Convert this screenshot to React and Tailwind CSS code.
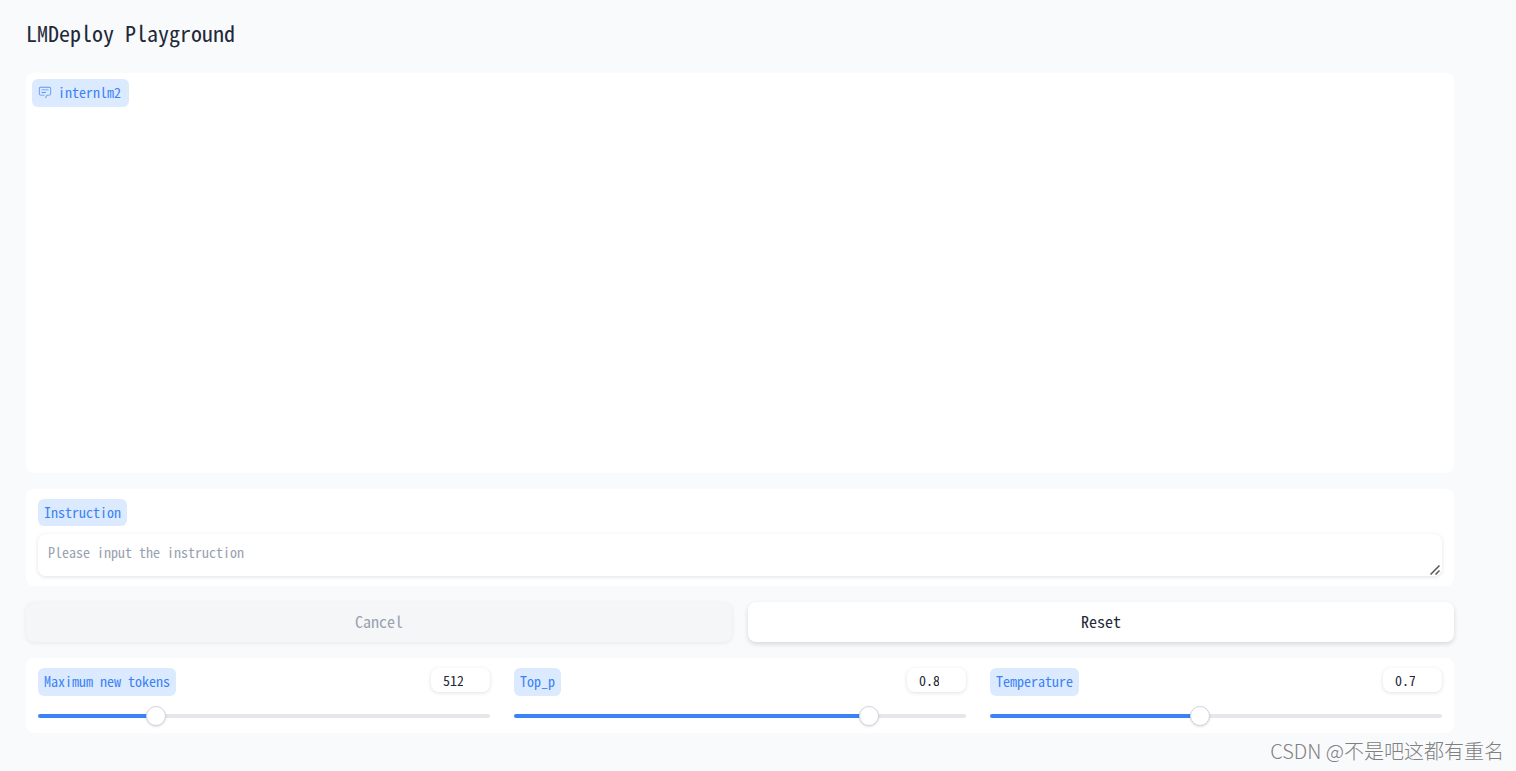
import React, { useState } from "react";

const chip = "flex w-fit items-center rounded-md bg-[#dbeafe] pb-0.5 text-sm text-[#3b82f6]";

const sliders = [
    { id: "max-tokens", label: "Maximum new tokens", min: 1, max: 2048, step: 1, initial: 512 },
    { id: "top-p", label: "Top_p", min: 0.01, max: 1, step: 0.01, initial: 0.8 },
    { id: "temperature", label: "Temperature", min: 0.01, max: 1.5, step: 0.01, initial: 0.7 },
];

function ChatIcon() {
    return (
        <svg viewBox="0 0 32 32" className="h-3.5 w-3.5 opacity-80" fill="currentColor" aria-hidden="true">
            <path d="M17.74 30L16 29l4-7h6a2 2 0 0 0 2-2V8a2 2 0 0 0-2-2H6a2 2 0 0 0-2 2v12a2 2 0 0 0 2 2h9v2H6a4 4 0 0 1-4-4V8a4 4 0 0 1 4-4h20a4 4 0 0 1 4 4v12a4 4 0 0 1-4 4h-4.84Z" />
            <path d="M8 10h16v2H8zM8 16h10v2H8z" />
        </svg>
    );
}

function ResizeGrip() {
    return (
        <svg
            viewBox="0 0 10 10"
            className="pointer-events-none absolute right-0.5 bottom-px h-2.5 w-2.5 text-[#555]"
            stroke="currentColor"
            strokeWidth="1.5"
            fill="none"
            aria-hidden="true"
        >
            <path d="M0.5 9.5L9.5 0.5M5.5 9.5L9.5 5.5" />
        </svg>
    );
}

function ParamSlider({ id, label, min, max, step, initial }) {
    const [value, setValue] = useState(initial);
    const percent = ((value - min) / (max - min)) * 100;

    return (
        <div>
            <div className="flex items-start justify-between">
                <label htmlFor={id} className={`${chip} h-7 px-1.5`}>{label}</label>
                <input
                    type="number"
                    aria-label={`${label} value`}
                    min={min}
                    max={max}
                    step={step}
                    value={value}
                    onChange={e => setValue(e.target.value)}
                    className="h-6 w-[59px] rounded-lg bg-white px-3 text-sm text-gray-800 shadow-[0_1px_4px_rgba(0,0,0,0.12)] outline-none"
                />
            </div>
            <div className="mt-2.5 mb-[7px] flex h-5 items-center">
                <input
                    id={id}
                    type="range"
                    min={min}
                    max={max}
                    step={step}
                    value={value}
                    onChange={e => setValue(e.target.value)}
                    style={{ backgroundSize: `${percent}% 100%` }}
                    className="h-1 w-full cursor-pointer appearance-none rounded-full bg-gray-200 bg-[linear-gradient(#3b82f6,#3b82f6)] bg-no-repeat [&::-webkit-slider-thumb]:h-5 [&::-webkit-slider-thumb]:w-5 [&::-webkit-slider-thumb]:appearance-none [&::-webkit-slider-thumb]:rounded-full [&::-webkit-slider-thumb]:border [&::-webkit-slider-thumb]:border-gray-300 [&::-webkit-slider-thumb]:bg-white [&::-webkit-slider-thumb]:shadow-sm"
                />
            </div>
        </div>
    );
}

function App() {
    const [instruction, setInstruction] = useState("");

    return (
        <div className="relative min-h-screen bg-[#f9fafc] pt-3.5 pr-[62px] pb-9 pl-[26px] font-['Noto_Sans_Mono_CJK_SC','Liberation_Mono',monospace] text-gray-800">
            <h1 className="mb-[23px] text-[22px] leading-9 font-medium text-gray-800">LMDeploy Playground</h1>

            <main className="flex flex-col gap-4">
                {/* Chat history */}
                <section className="h-[400px] rounded-lg bg-white p-1.5">
                    <div className={`${chip} h-7 gap-1.5 pr-2 pl-1.5`}>
                        <ChatIcon />
                        internlm2
                    </div>
                </section>

                <section className="rounded-lg bg-white px-3 py-2.5">
                    <label htmlFor="instruction" className={`${chip} mb-2 h-[27px] px-1.5`}>Instruction</label>
                    <div className="relative">
                        <textarea
                            id="instruction"
                            rows={1}
                            value={instruction}
                            onChange={e => setInstruction(e.target.value)}
                            placeholder="Please input the instruction"
                            className="block h-[42px] w-full overflow-hidden rounded-lg bg-white px-2.5 pt-2 pb-3 text-sm leading-5 shadow-[0_1px_4px_rgba(0,0,0,0.12)] outline-none placeholder:text-gray-400 [&::-webkit-resizer]:hidden"
                        />
                        <ResizeGrip />
                    </div>
                </section>

                <div className="grid grid-cols-2 gap-4 text-base">
                    <button disabled className="h-10 rounded-lg bg-[#f5f6f8] pb-0.5 text-gray-400 shadow-[0_1px_4px_rgba(0,0,0,0.08)]">
                        Cancel
                    </button>
                    <button
                        onClick={() => setInstruction("")}
                        className="h-10 rounded-lg bg-white pb-0.5 text-gray-800 shadow-[0_2px_5px_rgba(0,0,0,0.14)]"
                    >
                        Reset
                    </button>
                </div>

                {/* Sampling parameters */}
                <section className="grid grid-cols-3 gap-6 rounded-lg bg-white px-3 pt-2.5">
                    {sliders.map(s => <ParamSlider key={s.id} {...s} />)}
                </section>
            </main>

            <p className="absolute right-3 bottom-1 font-['Noto_Sans_CJK_SC',sans-serif] text-xl leading-8 font-light text-[#808080]">
                CSDN @不是吧这都有重名
            </p>
        </div>
    );
}

export default App;
